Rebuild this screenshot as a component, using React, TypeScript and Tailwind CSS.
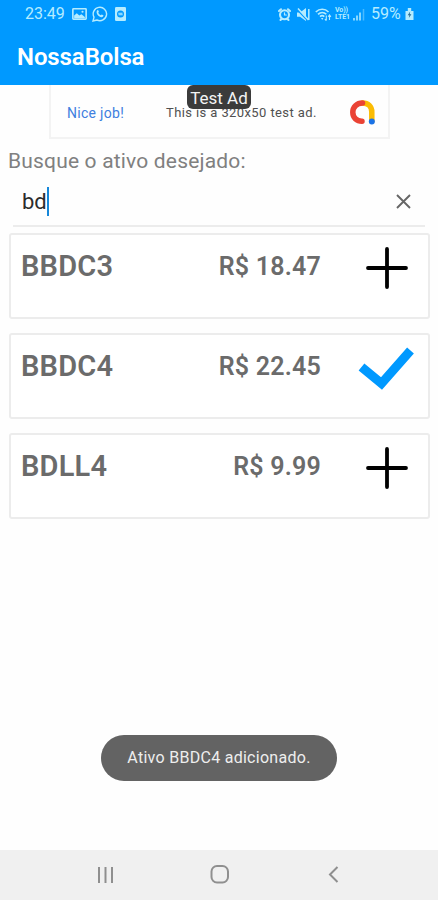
import { useState } from "react";

type Asset = {
    ticker: string;
    price: string;
    added: boolean;
};

const assets: Asset[] = [
    { ticker: "BBDC3", price: "R$ 18.47", added: false },
    { ticker: "BBDC4", price: "R$ 22.45", added: true },
    { ticker: "BDLL4", price: "R$ 9.99", added: false },
];

function StatusBar() {
    return (
        <div className="flex h-7 items-center justify-between pl-[25px] pr-[24px] text-[#b5ecff]">
            <div className="flex items-center">
                <span className="w-[47px] text-[16px] leading-7">23:49</span>
                {/* Gallery */}
                <svg width="15" height="12" viewBox="0 0 14 12" fill="none" stroke="currentColor" strokeWidth="1.5" preserveAspectRatio="none">
                    <rect x="0.8" y="0.8" width="12.4" height="10.4" rx="0.6" />
                    <path d="M2 10V7.5l2.5-2.3 2.3 2.4 2-1.4L12 9v1.5H2z" fill="currentColor" stroke="none" />
                    <circle cx="9.8" cy="3.8" r="1" fill="currentColor" stroke="none" />
                </svg>
                {/* WhatsApp */}
                <svg className="ml-[5px]" width="16" height="16" viewBox="0 0 16 16" fill="none" stroke="currentColor" strokeWidth="1.4">
                    <path d="M1 15l1-3.8A6.7 6.7 0 1 1 4.9 14z" />
                    <path d="M5 4.5c.7-1 1.3-.5 1.5.2l.4 1.1-.7 1c.6 1.2 1.4 2 2.6 2.5l.9-.9 1.7.9c.3.8-.8 2-2 1.9C6.8 10.9 4.4 8.2 4.6 5.7z" fill="currentColor" stroke="none" />
                </svg>
                {/* Backup */}
                <svg className="ml-[7px]" width="11" height="14" viewBox="0 0 11 14">
                    <rect width="11" height="14" rx="1.3" fill="currentColor" />
                    <circle cx="5.5" cy="7" r="3.5" fill="#0099ff" />
                    <path d="M3.3 6.2h4.2M3.5 7.8h4.2" stroke="currentColor" strokeWidth="1.1" />
                </svg>
            </div>

            <div className="flex items-center">
                {/* Alarm */}
                <svg width="13" height="13" viewBox="0 0 13 13" fill="none" stroke="currentColor" strokeLinecap="round">
                    <circle cx="6.5" cy="6.8" r="4.5" strokeWidth="2.1" />
                    <path d="M6.5 4.8V7H8.3" strokeWidth="1.2" />
                    <path d="M1 3l2-1.8M12 3l-2-1.8M2.5 12l1-1M10.5 12l-1-1" strokeWidth="2" />
                </svg>
                {/* Muted */}
                <svg className="ml-[6px]" width="13" height="13" viewBox="0 0 13 13">
                    <path d="M0 4.5h3L9 0v13L3 8.8H0z" fill="currentColor" />
                    <path d="M0 1.5L11 13" stroke="#0099ff" strokeWidth="1.3" />
                    <path d="M1 .5L11.5 12M11.8 1v11" stroke="currentColor" strokeWidth="1.5" />
                </svg>
                {/* Wifi */}
                <svg className="ml-[5px]" width="17" height="13" viewBox="0 0 17 13" fill="none" stroke="currentColor" strokeWidth="1.6">
                    <path d="M.8 4C4.5.4 10 .4 13.5 4M3 6.3c2.500-2.300 6-2.300 8.300 0M5 8.700c1.300-1.200 3-1.200 4.300 0" />
                    <path d="M6 10h2.400l-1.200 2z" fill="currentColor" stroke="none" />
                    <path d="M11.3 7.5v5M9.9 11l1.4 1.7M14.5 12V7M13.2 8.8L14.5 7l1.4 1.8" strokeWidth="1.1" />
                </svg>
                <div className="ml-[3px] flex w-[17px] flex-col text-[7px] font-bold leading-[7px] tracking-[-0.1px]">
                    <span>Vo))</span>
                    <span>LTE1</span>
                </div>
                {/* Signal */}
                <svg className="ml-px" width="12" height="13" viewBox="0 0 12 13" stroke="currentColor" strokeWidth="1.5">
                    <path d="M1 12.5V10M4 12.5V7.5M7 12.5V4.5" />
                    <path d="M10.5 12.5V1" opacity=".4" />
                </svg>
                <span className="ml-[6px] w-[31px] text-[16px] leading-7">59%</span>
                {/* Battery */}
                <svg className="ml-[3px]" width="9" height="12" viewBox="0 0 9 12">
                    <path d="M2.8 0h3.4v3H8.5v9H.5V3h2.3z" fill="currentColor" />
                    <path d="M5.2 3.5L2.7 7.3h1.7l-.6 2.8L6.4 6.3H4.7z" fill="#28698f" />
                </svg>
            </div>
        </div>
    );
}

function AdBanner() {
    return (
        <div className="relative ml-[49px] flex h-[54px] w-[341px] items-center border-x-2 border-b-2 border-[#f3f3f3] bg-[#fefefe] pl-4 pt-1 text-[13px]">
            <span className="w-[99px] text-[14px] tracking-[0.3px] text-[#3f7fe0]">Nice job!</span>
            <span className="w-[182px] whitespace-nowrap text-[13px] tracking-[0.4px] text-[#505050]">This is a 320x50 test ad.</span>
            <svg className="shrink-0" width="28" height="28" viewBox="0 0 28 28" fill="none" strokeWidth="5.5" strokeLinecap="round">
                <path d="M14.5 4c5.700 0 9.300 3.600 9.300 9V22" stroke="#fbbc04" />
                <path d="M14.5 4c-5.800 0-9.700 4-9.700 9.300 0 5.600 4.200 9 9.200 8.900" stroke="#ea4335" />
                <circle cx="23.8" cy="22.4" r="3" fill="#1a73e8" />
            </svg>
            <span className="absolute left-[136px] top-0 h-6 w-[64px] rounded-md bg-[#3b3b3b] text-center text-[17px] leading-[26px] text-[#f4f4f4]">
                Test Ad
            </span>
        </div>
    );
}

function AssetCard({ ticker, price, added }: Asset) {
    return (
        <li className="flex h-[86px] items-start rounded-[3px] border-2 border-[#ececec] bg-white text-[#6b6b6b]">
            <span className="w-[150px] pl-[10px] pt-[13px] text-[29px] font-semibold leading-[36px] tracking-[0.2px]">{ticker}</span>
            <span className="w-[160px] pt-[15px] text-right text-[25px] font-semibold leading-[34px] tracking-[0.2px]">{price}</span>
            <button className="ml-[37px] mt-[4px]" aria-label={added ? "Adicionado" : "Adicionar"}>
                {added ? (
                    <svg width="58" height="58" viewBox="0 0 58 58" fill="none" stroke="#0099ff" strokeWidth="9">
                        <path d="M3.500 28L23.500 44.500 52.500 11.500" />
                    </svg>
                ) : (
                    <svg width="58" height="58" viewBox="0 0 58 58" fill="none" stroke="black" strokeWidth="3.8" strokeLinecap="round">
                        <path d="M29 10v38M10 29h38" />
                    </svg>
                )}
            </button>
        </li>
    );
}

function NavigationBar() {
    return (
        <nav className="flex h-[50px] items-center bg-[#f0f0f0] pl-[97px] text-[#8f8f8f]">
            <svg width="18" height="18" viewBox="0 0 18 18" stroke="currentColor" strokeWidth="2">
                <path d="M2 1v16M8.5 1v16M15 1v16" />
            </svg>
            <svg className="ml-[95px]" width="20" height="20" viewBox="0 0 20 20" fill="none" stroke="currentColor" strokeWidth="2">
                <rect x="1.5" y="1" width="16.5" height="16.5" rx="5.5" />
            </svg>
            <svg className="ml-[97px]" width="14" height="18" viewBox="0 0 14 18" fill="none" stroke="currentColor" strokeWidth="2">
                <path d="M10.500 1L3 8.500l7.500 7.500" />
            </svg>
        </nav>
    );
}

function App() {
    const [query, setQuery] = useState("bd");

    return (
        <div className="flex h-[900px] w-[438px] flex-col overflow-hidden bg-[#fefefe] font-[Roboto,sans-serif]">
            <header className="h-[85px] bg-[#0099ff]">
                <StatusBar />
                <h1 className="pl-[17px] pt-[13px] text-[24px] font-semibold leading-[32px] tracking-[-0.1px] text-white">NossaBolsa</h1>
            </header>

            <AdBanner />

            <main className="flex-1">
                <p className="pl-2 pt-[8px] text-[21px] leading-[28px] tracking-[0.18px] text-[#808080]">Busque o ativo desejado:</p>

                {/* Search field */}
                <div className="ml-[13px] flex h-[52px] w-[412px] items-center border-b-2 border-[#ececec] pl-[9px] pr-[14px] pt-[3px]">
                    <span className="text-[22px] text-[#2c2c2c]">{query}</span>
                    <span className="h-[29px] w-[2px] bg-[#1687d9]" />
                    <button className="ml-auto" aria-label="Limpar" onClick={() => setQuery("")}>
                        <svg width="15" height="15" viewBox="0 0 15 15" stroke="#666666" strokeWidth="1.9">
                            <path d="M1 1l13 13M14 1L1 14" />
                        </svg>
                    </button>
                </div>

                <ul className="ml-[9px] mt-[6px] flex w-[421px] flex-col gap-[14px]">
                    {assets.map((asset) => (
                        <AssetCard key={asset.ticker} {...asset} />
                    ))}
                </ul>
            </main>

            {/* Toast */}
            <div className="mb-[69px] ml-[101px] flex h-[46px] w-[236px] items-center justify-center rounded-full bg-[#636363] text-[16px] tracking-[0.28px] text-[#eeeeee]">
                Ativo BBDC4 adicionado.
            </div>

            <NavigationBar />
        </div>
    );
}

export default App;
